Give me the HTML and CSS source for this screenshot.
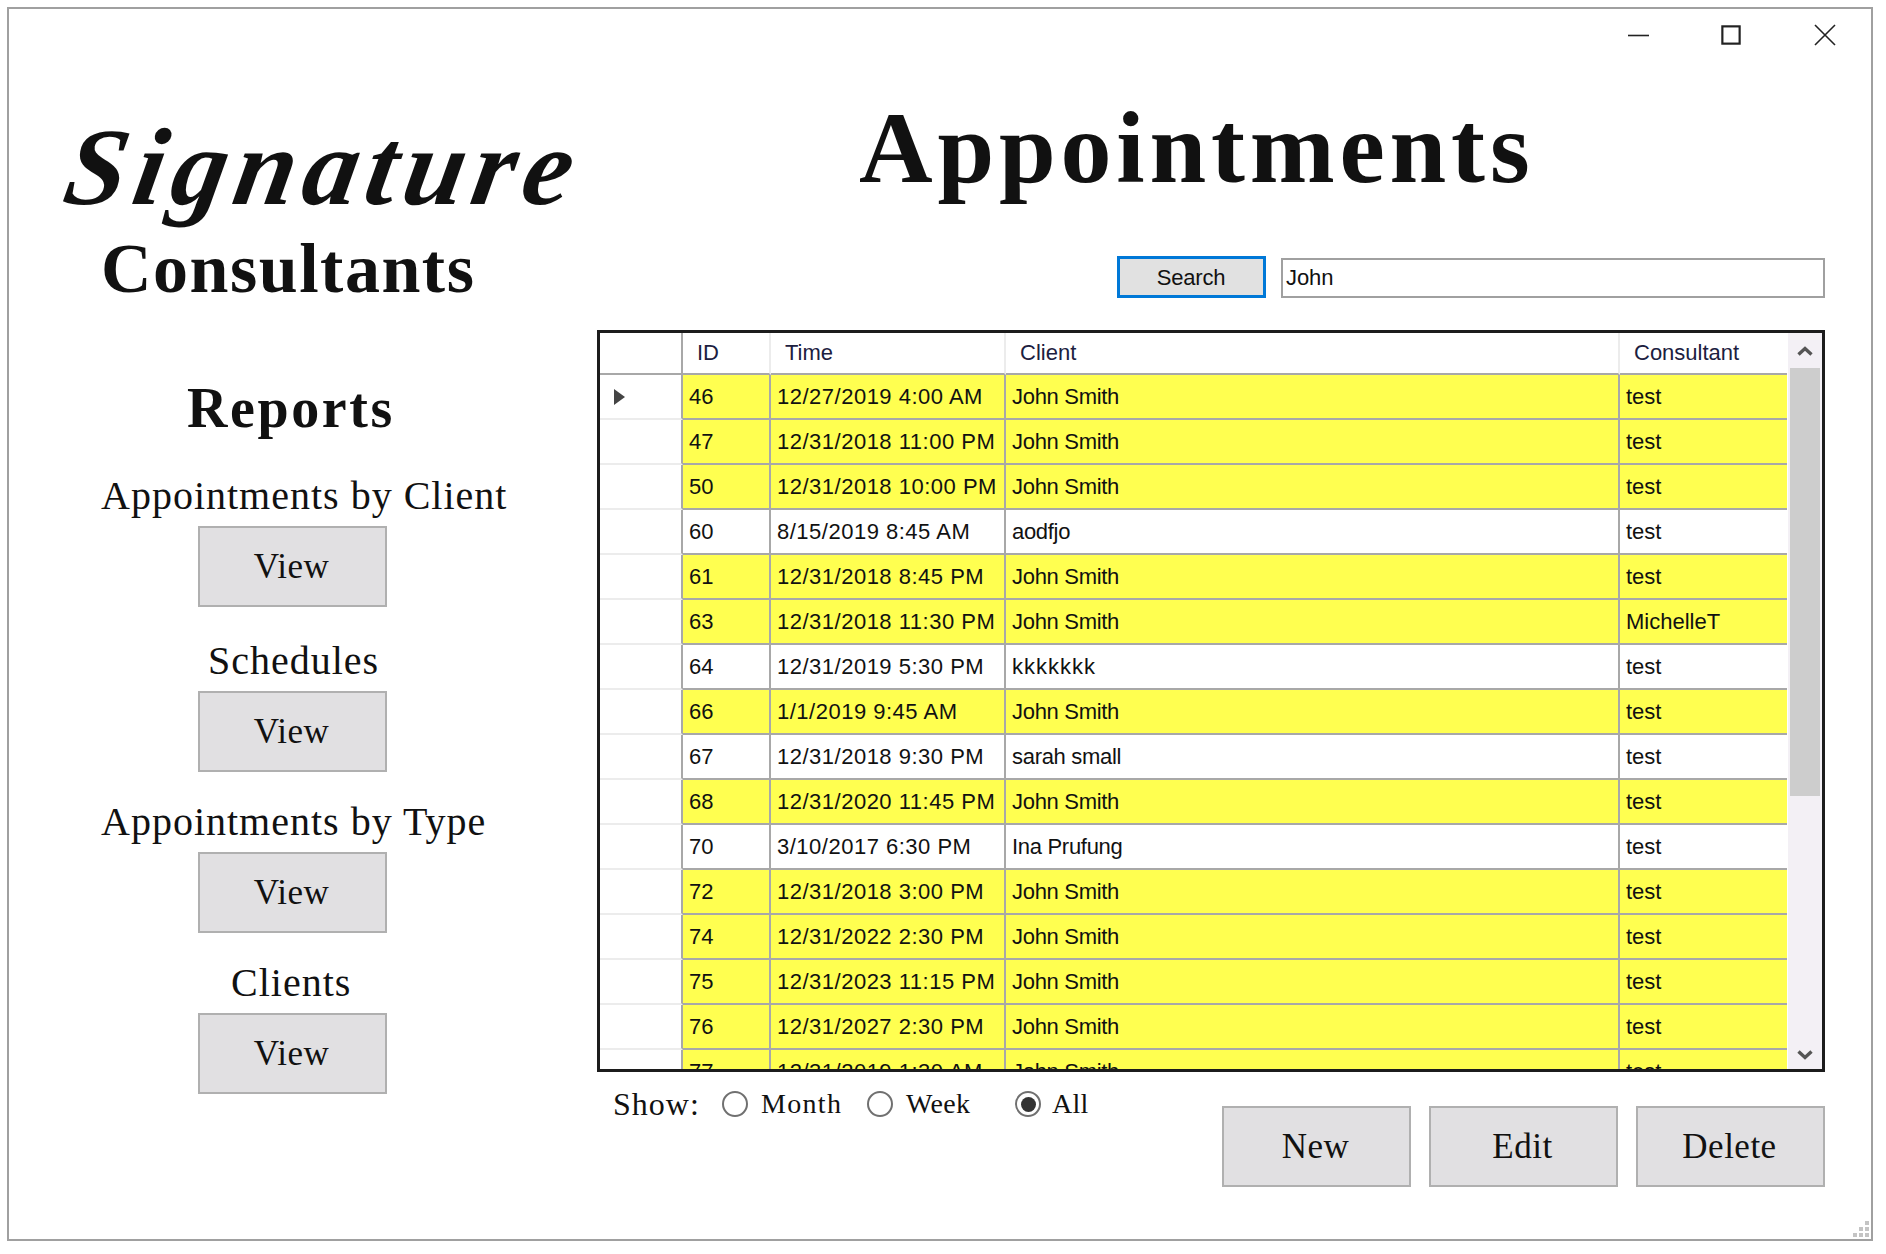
FILE: index.html
```html
<!DOCTYPE html>
<html lang="en">
<head>
<meta charset="utf-8">
<title>Appointments</title>
<link rel="stylesheet" href="styles.css">
</head>
<body>
<div class="window">
  <aside class="left">
    <div class="signature">Signature</div>
    <div class="consultants">Consultants</div>
    <div class="reports">Reports</div>
    <div class="report-label label-a">Appointments by Client</div>
    <button class="btn view">View</button>
    <div class="report-label label-b">Schedules</div>
    <button class="btn view">View</button>
    <div class="report-label label-c">Appointments by Type</div>
    <button class="btn view">View</button>
    <div class="report-label label-d">Clients</div>
    <button class="btn view">View</button>
  </aside>
  <main class="right">
    <div class="controls">
      <svg class="ctl ctl-min" viewBox="0 0 22 22"><path d="M0 11.500H21" stroke="#222" stroke-width="1.600" fill="none"/></svg>
      <svg class="ctl ctl-max" viewBox="0 0 22 22"><rect x="1.500" y="1.500" width="19" height="19" stroke="#222" stroke-width="2.400" fill="none"/></svg>
      <svg class="ctl ctl-close" viewBox="0 0 22 22"><path d="M1 1L21 21M21 1L1 21" stroke="#222" stroke-width="1.600" fill="none"/></svg>
    </div>
    <h1 class="title">Appointments</h1>
    <div class="search-row">
      <button class="search-btn">Search</button>
      <div class="search-input">John</div>
    </div>
    <div class="grid">
      <div class="grid-body">
        <table class="data">
          <colgroup><col class="c0"><col class="c1"><col class="c2"><col class="c3"><col class="c4"></colgroup>
          <thead>
            <tr><th class="rh"></th><th>ID</th><th>Time</th><th>Client</th><th>Consultant</th></tr>
          </thead>
          <tbody>
            <tr class="hl"><td class="rh"><span class="arrow"></span></td><td>46</td><td>12/27/2019 4:00 AM</td><td>John Smith</td><td>test</td></tr>
            <tr class="hl"><td class="rh"></td><td>47</td><td>12/31/2018 11:00 PM</td><td>John Smith</td><td>test</td></tr>
            <tr class="hl"><td class="rh"></td><td>50</td><td>12/31/2018 10:00 PM</td><td>John Smith</td><td>test</td></tr>
            <tr><td class="rh"></td><td>60</td><td>8/15/2019 8:45 AM</td><td>aodfjo</td><td>test</td></tr>
            <tr class="hl"><td class="rh"></td><td>61</td><td>12/31/2018 8:45 PM</td><td>John Smith</td><td>test</td></tr>
            <tr class="hl"><td class="rh"></td><td>63</td><td>12/31/2018 11:30 PM</td><td>John Smith</td><td>MichelleT</td></tr>
            <tr><td class="rh"></td><td>64</td><td>12/31/2019 5:30 PM</td><td class="wide">kkkkkkk</td><td>test</td></tr>
            <tr class="hl"><td class="rh"></td><td>66</td><td>1/1/2019 9:45 AM</td><td>John Smith</td><td>test</td></tr>
            <tr><td class="rh"></td><td>67</td><td>12/31/2018 9:30 PM</td><td>sarah small</td><td>test</td></tr>
            <tr class="hl"><td class="rh"></td><td>68</td><td>12/31/2020 11:45 PM</td><td>John Smith</td><td>test</td></tr>
            <tr><td class="rh"></td><td>70</td><td>3/10/2017 6:30 PM</td><td>Ina Prufung</td><td>test</td></tr>
            <tr class="hl"><td class="rh"></td><td>72</td><td>12/31/2018 3:00 PM</td><td>John Smith</td><td>test</td></tr>
            <tr class="hl"><td class="rh"></td><td>74</td><td>12/31/2022 2:30 PM</td><td>John Smith</td><td>test</td></tr>
            <tr class="hl"><td class="rh"></td><td>75</td><td>12/31/2023 11:15 PM</td><td>John Smith</td><td>test</td></tr>
            <tr class="hl"><td class="rh"></td><td>76</td><td>12/31/2027 2:30 PM</td><td>John Smith</td><td>test</td></tr>
            <tr class="hl"><td class="rh"></td><td>77</td><td>12/31/2019 1:30 AM</td><td>John Smith</td><td>test</td></tr>
          </tbody>
        </table>
      </div>
      <div class="scrollbar">
        <svg class="sb-arrow" viewBox="0 0 16 10"><path d="M1.500 8.500L8 2.500L14.500 8.500" stroke="#555" stroke-width="3.400" fill="none"/></svg>
        <div class="sb-thumb"></div>
        <svg class="sb-arrow sb-down" viewBox="0 0 16 10"><path d="M1.500 1.500L8 7.500L14.500 1.500" stroke="#555" stroke-width="3.400" fill="none"/></svg>
      </div>
    </div>
    <div class="bottom">
      <div class="show">
        <span class="show-label">Show:</span>
        <span class="radio"></span><span class="radio-label lbl-month">Month</span>
        <span class="radio"></span><span class="radio-label lbl-week">Week</span>
        <span class="radio checked"></span><span class="radio-label lbl-all">All</span>
      </div>
      <div class="actions">
        <button class="btn">New</button>
        <button class="btn">Edit</button>
        <button class="btn">Delete</button>
      </div>
    </div>
  </main>
  <svg class="grip" viewBox="0 0 18 18"><path d="M14 2h4v4h-4zM8 8h4v4H8zM14 8h4v4h-4zM2 14h4v4H2zM8 14h4v4H8zM14 14h4v4h-4z" fill="#c4c4c4"/></svg>
</div>
</body>
</html>
```
FILE: styles.css
```css
* { box-sizing: border-box; }
html, body { margin: 0; padding: 0; background: #fff; }
body { width: 1886px; height: 1254px; padding: 7px 0 0 7px; overflow: hidden; color: #111; font-family: "Liberation Serif", serif; }
.window { position: relative; width: 1866px; height: 1234px; border: 2px solid #a0a0a0; background: #fff; display: flex; }

.left { width: 588px; flex: none; display: flex; flex-direction: column; align-items: flex-start; padding-top: 99px; }
.signature { margin-left: 58px; font-size: 110px; line-height: 118px; height: 118px; font-style: italic; font-weight: 700; letter-spacing: 7.500px; transform: skewX(-10deg); white-space: nowrap; }
.consultants { margin-left: 92px; margin-top: 8px; font-size: 70px; line-height: 70px; font-weight: 700; letter-spacing: 1.500px; }
.reports { margin-left: 178px; margin-top: 74px; font-size: 56px; line-height: 60px; font-weight: 700; letter-spacing: 2.600px; }
.report-label { font-size: 40px; line-height: 46px; letter-spacing: 1px; white-space: nowrap; }
.label-a { margin-left: 92px; margin-top: 35px; }
.label-b { margin-left: 199px; margin-top: 31px; }
.label-c { margin-left: 92px; margin-top: 27px; }
.label-d { margin-left: 222px; margin-top: 27px; }
.btn { width: 189px; height: 81px; flex: none; background: #e1e0e2; border: 2px solid #b0b0b0; font-family: "Liberation Serif", serif; font-size: 35px; color: #111; padding: 0 2px 0 0; letter-spacing: .5px; }
.view { margin-left: 189px; margin-top: 7px; }

.right { flex: 1; display: flex; flex-direction: column; padding: 15px 46px 0 0; min-width: 0; }
.controls { display: flex; justify-content: flex-end; align-items: center; height: 22px; margin-right: -11px; }
.ctl { width: 22px; height: 22px; display: block; }
.ctl-max { margin-left: 71px; width: 20px; height: 20px; }
.ctl-close { margin-left: 73px; }
.title { margin: 42px 0 0 262px; height: 168px; font-size: 102px; line-height: 120px; letter-spacing: 4.800px; font-weight: 700; white-space: nowrap; }
.search-row { display: flex; justify-content: flex-end; align-items: flex-end; height: 42px; gap: 15px; }
.search-btn { width: 149px; height: 42px; background: #e1e1e1; border: 3px solid #0078d7; font-family: "Liberation Sans", sans-serif; font-size: 22px; color: #111; padding: 2px 1px 0 0; letter-spacing: -.2px; }
.search-input { width: 544px; height: 40px; border: 2px solid #a0a0a0; font-family: "Liberation Sans", sans-serif; font-size: 22px; line-height: 36px; padding-left: 3px; letter-spacing: -.1px; }

.grid { margin-top: 32px; height: 742px; border: 3px solid #1c1c1c; display: flex; overflow: hidden; background: #fff; }
.grid-body { width: 1187px; flex: none; height: 100%; overflow: hidden; }
.data { border-collapse: separate; border-spacing: 0; table-layout: fixed; width: 1187px; font-family: "Liberation Sans", sans-serif; font-size: 22px; color: #111; }
.c0 { width: 83px; } .c1 { width: 88px; } .c2 { width: 235px; } .c3 { width: 614px; } .c4 { width: 167px; }
.data th { height: 42px; font-weight: 400; text-align: left; padding: 0 0 0 14px; border-right: 2px solid #ececec; border-bottom: 2px solid #a8a8a8; color: #1c2040; }
.data th:last-child { border-right: 0; }
.data th.rh { border-right: 2px solid #a8a8a8; }
.data td { height: 45px; padding: 0 0 0 6px; border-right: 2px solid #a8a8a8; border-bottom: 2px solid #a8a8a8; white-space: nowrap; overflow: hidden; }
.data td:last-child { border-right: 0; }
.data td:nth-child(3) { letter-spacing: .5px; }
.data td:nth-child(4) { letter-spacing: -.3px; }
.data td.wide { letter-spacing: 1px; }
.data td.rh { border-bottom: 2px solid #ececec; padding-left: 14px; }
.hl td { background: #ffff50; }
.hl td.rh { background: #fff; }
.arrow { display: block; width: 0; height: 0; border-left: 11px solid #444; border-top: 8px solid transparent; border-bottom: 8px solid transparent; }
.scrollbar { flex: 1; margin-left: 1px; background: #f3f0f5; display: flex; flex-direction: column; align-items: center; }
.sb-arrow { width: 16px; height: 10px; margin-top: 13px; display: block; flex: none; }
.sb-thumb { width: 30px; height: 428px; margin-top: 12px; background: #cdcdcd; flex: none; }
.sb-down { margin-top: auto; margin-bottom: 9px; }

.bottom { display: flex; align-items: flex-start; }
.show { display: flex; align-items: center; height: 40px; margin-top: 12px; margin-left: 16px; flex: 1; }
.show-label { font-size: 32px; letter-spacing: 1px; width: 109px; flex: none; }
.radio { width: 26px; height: 26px; border: 2px solid #707070; border-radius: 50%; flex: none; display: flex; align-items: center; justify-content: center; }
.checked::after { content: ""; width: 15px; height: 15px; border-radius: 50%; background: #333; }
.radio-label { font-size: 28px; margin-left: 13px; letter-spacing: .3px; white-space: nowrap; flex: none; }
.lbl-month { width: 106px; letter-spacing: 1.300px; }
.lbl-week { width: 109px; }
.lbl-all { margin-left: 11px; }
.actions { display: flex; gap: 18px; margin-top: 34px; }
.grip { position: absolute; right: 2px; bottom: 2px; width: 18px; height: 18px; }
```
